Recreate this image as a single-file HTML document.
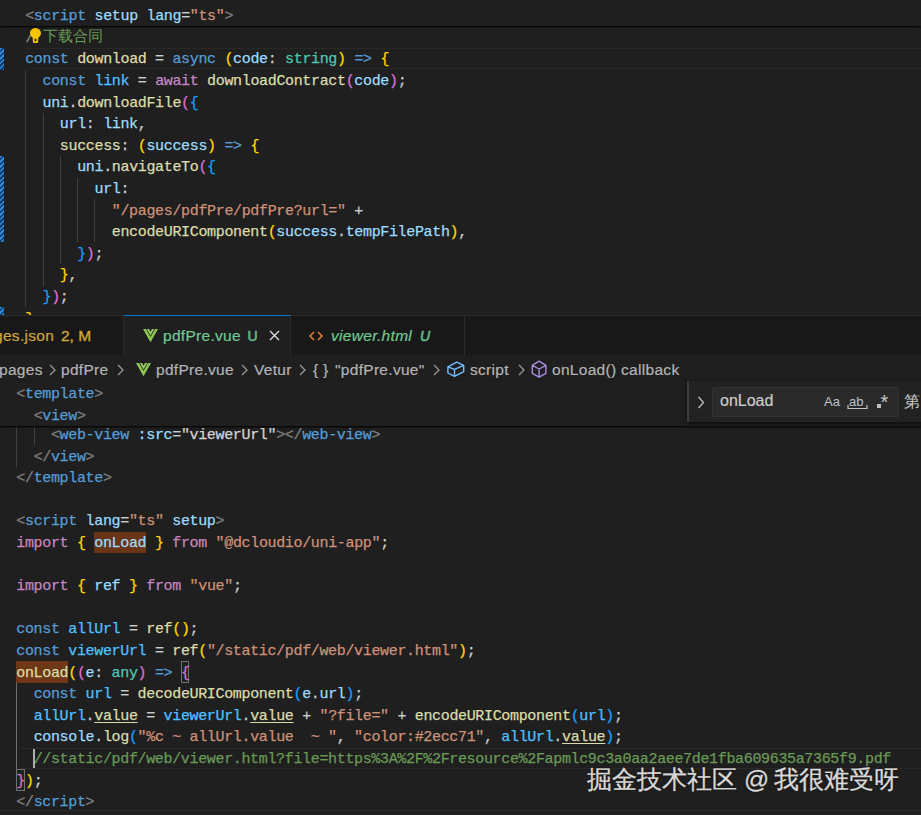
<!DOCTYPE html>
<html><head><meta charset="utf-8"><style>
html,body{margin:0;padding:0;}
body{width:921px;height:815px;overflow:hidden;position:relative;background:#1f1f1f;font-family:"Liberation Sans",sans-serif;}
.ln{position:absolute;white-space:pre;font-family:"Liberation Mono",monospace;font-size:15.000px;letter-spacing:-0.3415px;line-height:21.6px;height:21.6px;color:#cccccc;-webkit-text-stroke:0.25px currentColor;}
.abs{position:absolute;}
.kw{color:#569cd6} .tag{color:#569cd6} .br{color:#808080} .attr{color:#9cdcfe} .str{color:#ce9178}
.ctl{color:#c586c0} .fn{color:#dcdcaa} .var{color:#9cdcfe} .cst{color:#4fc1ff} .typ{color:#4ec9b0}
.com{color:#6a9955} .p{color:#cccccc} .w{color:#d4d4d4} .b1{color:#ffd700} .b2{color:#da70d6} .b3{color:#179fff}
.u{text-decoration:underline;text-underline-offset:1.5px;text-decoration-thickness:1.2px;}
.guide{position:absolute;width:1px;background:#404040;}
.hatch{position:absolute;left:0;width:3.7px;background:repeating-linear-gradient(135deg,#2a86da 0 1.7px,#0f3d6e 1.7px 3.4px);}
.ui{position:absolute;white-space:pre;font-family:"Liberation Sans",sans-serif;}
</style></head><body>

<div class="abs" style="left:0;top:0;width:921px;height:315px;background:#1f1f1f;overflow:hidden">
<div class="abs" style="left:0;top:48.10px;width:921px;height:20.60px;border-top:1px solid #282828;border-bottom:1px solid #282828;box-sizing:border-box;left:25px"></div>
<div class="hatch" style="top:48.10px;height:21.60px"></div>
<div class="hatch" style="top:156.10px;height:86.40px"></div>
<div class="hatch" style="top:307.30px;height:21.60px"></div>
<div class="guide" style="left:25.20px;top:69.70px;height:237.60px"></div>
<div class="guide" style="left:42.52px;top:112.90px;height:172.80px"></div>
<div class="guide" style="left:59.84px;top:156.10px;height:108.00px"></div>
<div class="guide" style="left:77.16px;top:177.70px;height:64.80px"></div>
<div class="guide" style="left:94.48px;top:199.30px;height:43.20px"></div>
<div class="ln" style="left:25.20px;top:49.30px"><span class="kw">const</span> <span class="fn">download</span><span class="p"> = </span><span class="kw">async</span> <span class="b1">(</span><span class="var">code</span><span class="p">: </span><span class="typ">string</span><span class="b1">)</span> <span class="kw">=&gt;</span> <span class="b1">{</span></div>
<div class="ln" style="left:25.20px;top:70.90px">  <span class="kw">const</span> <span class="cst">link</span><span class="p"> = </span><span class="ctl">await</span> <span class="fn">downloadContract</span><span class="b2">(</span><span class="var">code</span><span class="b2">)</span><span class="p">;</span></div>
<div class="ln" style="left:25.20px;top:92.50px">  <span class="var">uni</span><span class="p">.</span><span class="fn">downloadFile</span><span class="b2">(</span><span class="b3">{</span></div>
<div class="ln" style="left:25.20px;top:114.10px">    <span class="var">url</span><span class="p">: </span><span class="var">link</span><span class="p">,</span></div>
<div class="ln" style="left:25.20px;top:135.70px">    <span class="fn">success</span><span class="p">: </span><span class="b1">(</span><span class="var">success</span><span class="b1">)</span> <span class="kw">=&gt;</span> <span class="b1">{</span></div>
<div class="ln" style="left:25.20px;top:157.30px">      <span class="var">uni</span><span class="p">.</span><span class="fn">navigateTo</span><span class="b2">(</span><span class="b3">{</span></div>
<div class="ln" style="left:25.20px;top:178.90px">        <span class="var">url</span><span class="p">:</span></div>
<div class="ln" style="left:25.20px;top:200.50px">          <span class="str">&quot;/pages/pdfPre/pdfPre?url=&quot;</span><span class="p"> +</span></div>
<div class="ln" style="left:25.20px;top:222.10px">          <span class="fn">encodeURIComponent</span><span class="b1">(</span><span class="var">success</span><span class="p">.</span><span class="var">tempFilePath</span><span class="b1">)</span><span class="p">,</span></div>
<div class="ln" style="left:25.20px;top:243.70px">      <span class="b3">}</span><span class="b2">)</span><span class="p">;</span></div>
<div class="ln" style="left:25.20px;top:265.30px">    <span class="b1">}</span><span class="p">,</span></div>
<div class="ln" style="left:25.20px;top:286.90px">  <span class="b3">}</span><span class="b2">)</span><span class="p">;</span></div>
<div class="ln" style="left:25.20px;top:308.50px"><span class="b1">}</span><span class="p">;</span></div>
<div class="ln" style="left:25.20px;top:27.70px"><span class="com" style="color:#7d8f70">/</span></div>
<div class="ui" style="left:43px;top:28.4px;font-size:14.5px;line-height:16px;color:#6a9955">下载合同</div>
<svg class="abs" style="left:29.8px;top:27.6px" width="11" height="15.2" viewBox="0 0 11 15.2"><path d="M5.5 0C2.4 0 0 2.3 0 5.2 0 7.2 1.2 8.3 2.2 9.3 2.7 9.8 2.8 10.3 2.8 11V13.5C2.8 14.5 3.6 15.2 4.5 15.2H6.5C7.4 15.2 8.2 14.5 8.2 13.5V11C8.2 10.3 8.3 9.8 8.8 9.3 9.8 8.3 11 7.2 11 5.2 11 2.3 8.6 0 5.5 0Z" fill="#f5c400"/><ellipse cx="5.5" cy="12" rx="1" ry="1.5" fill="#1f1f1f"/></svg>
<div class="abs" style="left:0;top:0;width:921px;height:26.3px;background:#1f1f1f;box-shadow:0 1px 2px #000"></div>
<div class="ln" style="left:25.20px;top:6.10px"><span class="br">&lt;</span><span class="tag">script</span> <span class="attr">setup</span> <span class="attr">lang</span><span class="p">=</span><span class="str">&quot;ts&quot;</span><span class="br">&gt;</span></div>
</div>
<div class="abs" style="left:0;top:315px;width:921px;height:40px;background:#181818;border-top:1px solid #2b2b2b;box-sizing:border-box"></div>
<div class="abs" style="left:0;top:316px;width:123px;height:39px;background:#181818;border-right:1px solid #2b2b2b"></div>
<div class="ui" style="left:-6px;top:326.5px;font-size:15.5px;letter-spacing:0.3px;color:#cda73a;-webkit-text-stroke:0.2px currentColor">ges.json</div>
<div class="ui" style="left:61px;top:326.5px;font-size:15.5px;letter-spacing:0px;color:#cda73a;-webkit-text-stroke:0.35px currentColor">2, M</div>
<div class="abs" style="left:124px;top:315px;width:167px;height:41px;background:#1f1f1f;border-top:1px solid #0078d4;border-right:1px solid #2b2b2b;box-sizing:border-box"></div>
<svg class="abs" style="left:143px;top:328.5px" width="15" height="13.3" viewBox="0 0 15 13.3"><path d="M0 0H3L7.5 8.1 12 0H15L7.5 13.3Z" fill="#8fc552"/><path d="M3.9 0H6L7.5 2.7 9 0H11.1L7.5 6.6Z" fill="#9ccf62"/></svg>
<div class="ui" style="left:163px;top:326.5px;font-size:15.5px;letter-spacing:0.3px;color:#73c991;-webkit-text-stroke:0.2px currentColor">pdfPre.vue</div>
<div class="ui" style="left:247.5px;top:327.5px;font-size:14px;color:#66b888;-webkit-text-stroke:0.6px currentColor">U</div>
<svg class="abs" style="left:269px;top:330px" width="11" height="11" viewBox="0 0 11 11"><path d="M1 1L10 10M10 1L1 10" stroke="#dddddd" stroke-width="1.4"/></svg>
<div class="abs" style="left:291px;top:316px;width:173px;height:39px;background:#181818;border-right:1px solid #2b2b2b"></div>
<svg class="abs" style="left:309px;top:331px" width="14" height="10" viewBox="0 0 14 10"><path d="M5 1L1 5l4 4M9 1l4 4-4 4" stroke="#e37933" stroke-width="1.6" fill="none"/></svg>
<div class="ui" style="left:331px;top:326.5px;font-size:15.5px;font-style:italic;letter-spacing:0.3px;color:#73c991;-webkit-text-stroke:0.2px currentColor">viewer.html</div>
<div class="ui" style="left:420px;top:327.5px;font-size:14px;font-style:italic;color:#66b888;-webkit-text-stroke:0.6px currentColor">U</div>
<div class="abs" style="left:0;top:355px;width:921px;height:26px;background:#1f1f1f"></div>
<div class="ui" style="left:-1px;font-size:15.5px;letter-spacing:0.3px;color:#b4b4b4;top:360.5px;-webkit-text-stroke:0.2px currentColor">pages</div>
<svg class="abs" style="left:49px;top:364px" width="7" height="12" viewBox="0 0 7 12"><path d="M1 1l5 5-5 5" stroke="#a0a0a0" stroke-width="1.2" fill="none"/></svg>
<div class="ui" style="left:61px;font-size:15.5px;letter-spacing:0.3px;color:#b4b4b4;top:360.5px;-webkit-text-stroke:0.2px currentColor">pdfPre</div>
<svg class="abs" style="left:117px;top:364px" width="7" height="12" viewBox="0 0 7 12"><path d="M1 1l5 5-5 5" stroke="#a0a0a0" stroke-width="1.2" fill="none"/></svg>
<svg class="abs" style="left:136px;top:362.5px" width="15" height="13.3" viewBox="0 0 15 13.3"><path d="M0 0H3L7.5 8.1 12 0H15L7.5 13.3Z" fill="#8fc552"/><path d="M3.9 0H6L7.5 2.7 9 0H11.1L7.5 6.6Z" fill="#9ccf62"/></svg>
<div class="ui" style="left:156px;font-size:15.5px;letter-spacing:0.3px;color:#b4b4b4;top:360.5px;-webkit-text-stroke:0.2px currentColor">pdfPre.vue</div>
<svg class="abs" style="left:241px;top:364px" width="7" height="12" viewBox="0 0 7 12"><path d="M1 1l5 5-5 5" stroke="#a0a0a0" stroke-width="1.2" fill="none"/></svg>
<div class="ui" style="left:254px;font-size:15.5px;letter-spacing:0.3px;color:#b4b4b4;top:360.5px;-webkit-text-stroke:0.2px currentColor">Vetur</div>
<svg class="abs" style="left:299px;top:364px" width="7" height="12" viewBox="0 0 7 12"><path d="M1 1l5 5-5 5" stroke="#a0a0a0" stroke-width="1.2" fill="none"/></svg>
<div class="ui" style="left:313px;font-size:15.5px;letter-spacing:0.3px;color:#b4b4b4;top:360.5px;-webkit-text-stroke:0.2px currentColor">{ }</div>
<div class="ui" style="left:335px;font-size:15.5px;letter-spacing:0.3px;color:#b4b4b4;top:360.5px;-webkit-text-stroke:0.2px currentColor">"pdfPre.vue"</div>
<svg class="abs" style="left:433px;top:364px" width="7" height="12" viewBox="0 0 7 12"><path d="M1 1l5 5-5 5" stroke="#a0a0a0" stroke-width="1.2" fill="none"/></svg>
<svg class="abs" style="left:447px;top:361px" width="18" height="17" viewBox="0 0 18 17"><path d="M9.8 1.1L0.9 5.8 7.5 8.4 16.7 4.3Z M0.9 5.8V12L7.5 15.4 16.7 10.6V4.3 M7.5 8.4V15.4" stroke="#75beff" stroke-width="1.4" fill="none" stroke-linejoin="round"/></svg>
<div class="ui" style="left:470px;font-size:15.5px;letter-spacing:0.3px;color:#b4b4b4;top:360.5px;-webkit-text-stroke:0.2px currentColor">script</div>
<svg class="abs" style="left:518px;top:364px" width="7" height="12" viewBox="0 0 7 12"><path d="M1 1l5 5-5 5" stroke="#a0a0a0" stroke-width="1.2" fill="none"/></svg>
<svg class="abs" style="left:531px;top:360px" width="17" height="19" viewBox="0 0 17 19"><path d="M8.1 1.2L1.3 5.4 8.1 9 14.9 5.4Z M1.3 5.4V13.4L8.1 17.1 14.9 13.4V5.4 M8.1 9V17.1" stroke="#a98ee0" stroke-width="1.4" fill="none" stroke-linejoin="round"/></svg>
<div class="ui" style="left:552px;font-size:15.5px;letter-spacing:0.3px;color:#b4b4b4;top:360.5px;-webkit-text-stroke:0.2px currentColor">onLoad() callback</div>
<div class="abs" style="left:0;top:381.80px;width:921px;height:433.20px;background:#1f1f1f"></div>
<div class="abs" style="left:19.5px;top:747.80px;width:902px;height:21.60px;border-top:1.5px solid #2a2a2a;border-bottom:1.5px solid #2a2a2a;box-sizing:border-box"></div>
<div class="abs" style="left:94.24px;top:531.80px;width:51.96px;height:21.60px;background:#6a3514"></div>
<div class="abs" style="left:16.30px;top:661.40px;width:51.96px;height:21.60px;background:#6e3715"></div>
<div class="abs" style="left:180.84px;top:661.40px;width:8.66px;height:21.60px;border:1px solid #707070;box-sizing:border-box;background:#0064001a"></div>
<div class="abs" style="left:16.30px;top:769.40px;width:8.66px;height:21.60px;border:1px solid #707070;box-sizing:border-box;background:#0064001a"></div>
<div class="guide" style="left:16.30px;top:423.80px;height:43.20px"></div>
<div class="guide" style="left:33.62px;top:423.80px;height:21.60px"></div>
<div class="guide" style="left:16.30px;top:683.00px;height:86.40px;background:#707070"></div>
<div class="ln" style="left:16.30px;top:425.00px">    <span class="br">&lt;</span><span class="tag">web-view</span> <span class="attr">:src</span><span class="p">=</span><span class="w">&quot;</span><span class="w">viewerUrl</span><span class="w">&quot;</span><span class="br">&gt;&lt;/</span><span class="tag">web-view</span><span class="br">&gt;</span></div>
<div class="ln" style="left:16.30px;top:446.60px">  <span class="br">&lt;/</span><span class="tag">view</span><span class="br">&gt;</span></div>
<div class="ln" style="left:16.30px;top:468.20px"><span class="br">&lt;/</span><span class="tag">template</span><span class="br">&gt;</span></div>
<div class="ln" style="left:16.30px;top:489.80px"></div>
<div class="ln" style="left:16.30px;top:511.40px"><span class="br">&lt;</span><span class="tag">script</span> <span class="attr">lang</span><span class="p">=</span><span class="str">&quot;ts&quot;</span> <span class="attr">setup</span><span class="br">&gt;</span></div>
<div class="ln" style="left:16.30px;top:533.00px"><span class="ctl">import</span> <span class="b1">{</span> <span class="var">onLoad</span> <span class="b1">}</span> <span class="ctl">from</span> <span class="str">&quot;@dcloudio/uni-app&quot;</span><span class="p">;</span></div>
<div class="ln" style="left:16.30px;top:554.60px"></div>
<div class="ln" style="left:16.30px;top:576.20px"><span class="ctl">import</span> <span class="b1">{</span> <span class="var">ref</span> <span class="b1">}</span> <span class="ctl">from</span> <span class="str">&quot;vue&quot;</span><span class="p">;</span></div>
<div class="ln" style="left:16.30px;top:597.80px"></div>
<div class="ln" style="left:16.30px;top:619.40px"><span class="kw">const</span> <span class="cst">allUrl</span><span class="p"> = </span><span class="fn">ref</span><span class="b1">()</span><span class="p">;</span></div>
<div class="ln" style="left:16.30px;top:641.00px"><span class="kw">const</span> <span class="cst">viewerUrl</span><span class="p"> = </span><span class="fn">ref</span><span class="b1">(</span><span class="str">&quot;/static/pdf/web/viewer.html&quot;</span><span class="b1">)</span><span class="p">;</span></div>
<div class="ln" style="left:16.30px;top:662.60px"><span class="fn">onLoad</span><span class="b1">(</span><span class="b2">(</span><span class="var">e</span><span class="p">: </span><span class="typ">any</span><span class="b2">)</span> <span class="kw">=&gt;</span> <span class="b2">{</span></div>
<div class="ln" style="left:16.30px;top:684.20px">  <span class="kw">const</span> <span class="cst">url</span><span class="p"> = </span><span class="fn">decodeURIComponent</span><span class="b3">(</span><span class="var">e</span><span class="p">.</span><span class="var">url</span><span class="b3">)</span><span class="p">;</span></div>
<div class="ln" style="left:16.30px;top:705.80px">  <span class="cst">allUrl</span><span class="p">.</span><span class="fn u">value</span><span class="p"> = </span><span class="cst">viewerUrl</span><span class="p">.</span><span class="fn u">value</span><span class="p"> + </span><span class="str">&quot;?file=&quot;</span><span class="p"> + </span><span class="fn">encodeURIComponent</span><span class="b3">(</span><span class="cst">url</span><span class="b3">)</span><span class="p">;</span></div>
<div class="ln" style="left:16.30px;top:727.40px">  <span class="var">console</span><span class="p">.</span><span class="fn">log</span><span class="b3">(</span><span class="str">&quot;%c ~ allUrl.value  ~ &quot;</span><span class="p">, </span><span class="str">&quot;color:#2ecc71&quot;</span><span class="p">, </span><span class="cst">allUrl</span><span class="p">.</span><span class="fn u">value</span><span class="b3">)</span><span class="p">;</span></div>
<div class="ln" style="left:16.30px;top:749.00px">  <span class="com">//static/pdf/web/viewer.html?file=https%3A%2F%2Fresource%2Fapmlc9c3a0aa2aee7de1fba609635a7365f9.pdf</span></div>
<div class="ln" style="left:16.30px;top:770.60px"><span class="b2">}</span><span class="b1">)</span><span class="p">;</span></div>
<div class="ln" style="left:16.30px;top:792.20px"><span class="br">&lt;/</span><span class="tag">script</span><span class="br">&gt;</span></div>
<div class="abs" style="left:32.62px;top:748.80px;width:2px;height:19.60px;background:#aeafad"></div>
<div class="abs" style="left:0;top:381px;width:921px;height:44.6px;background:#1f1f1f;box-shadow:0 1px 2px #000"></div>
<div class="ln" style="left:16.30px;top:384.00px"><span class="br">&lt;</span><span class="tag">template</span><span class="br">&gt;</span></div>
<div class="ln" style="left:16.30px;top:405.60px">  <span class="br">&lt;</span><span class="tag">view</span><span class="br">&gt;</span></div>
<div class="abs" style="left:0;top:810px;width:921px;height:1px;background:#2b2b2b"></div>
<div class="abs" style="left:687px;top:381px;width:240px;height:41px;background:#222222;box-shadow:0 2px 4px rgba(0,0,0,0.6)"></div>
<div class="abs" style="left:687px;top:381px;width:2px;height:41px;background:#3c3c3c"></div>
<svg class="abs" style="left:697px;top:396px" width="8" height="13" viewBox="0 0 8 13"><path d="M1.5 1l5 5.5-5 5.5" stroke="#c0c0c0" stroke-width="1.3" fill="none"/></svg>
<div class="abs" style="left:712px;top:387px;width:187px;height:30px;background:#2a2a2a;border:1px solid #333;box-sizing:border-box;border-radius:2px"></div>
<div class="ui" style="left:720px;top:392px;font-size:16px;color:#cccccc;-webkit-text-stroke:0.2px currentColor">onLoad</div>
<div class="ui" style="left:824px;top:394px;font-size:13px;color:#c0c0c0">Aa</div>
<div class="ui" style="left:849px;top:393.5px;font-size:13px;color:#c0c0c0">ab</div>
<svg class="abs" style="left:847px;top:405px" width="21" height="5" viewBox="0 0 21 5"><path d="M1 0v3.5h19V0" stroke="#c0c0c0" stroke-width="1.2" fill="none"/></svg>
<div class="abs" style="left:877px;top:404px;width:4px;height:4px;background:#c0c0c0"></div>
<div class="ui" style="left:880.5px;top:391.5px;font-size:20px;line-height:20px;color:#c8c8c8">*</div>
<div class="ui" style="left:904px;top:392px;font-size:16px;color:#cccccc">第</div>
<div class="ui" style="left:587px;top:762.5px;font-size:24.8px;color:#d8d8d8;-webkit-text-stroke:0.3px currentColor;text-shadow:0 0 2px rgba(0,0,0,0.8)">掘金技术社区 @</div>
<div class="ui" style="left:773.5px;top:762.5px;font-size:24.8px;color:#d8d8d8;-webkit-text-stroke:0.3px currentColor;text-shadow:0 0 2px rgba(0,0,0,0.8)">我很难受呀</div>
</body></html>
